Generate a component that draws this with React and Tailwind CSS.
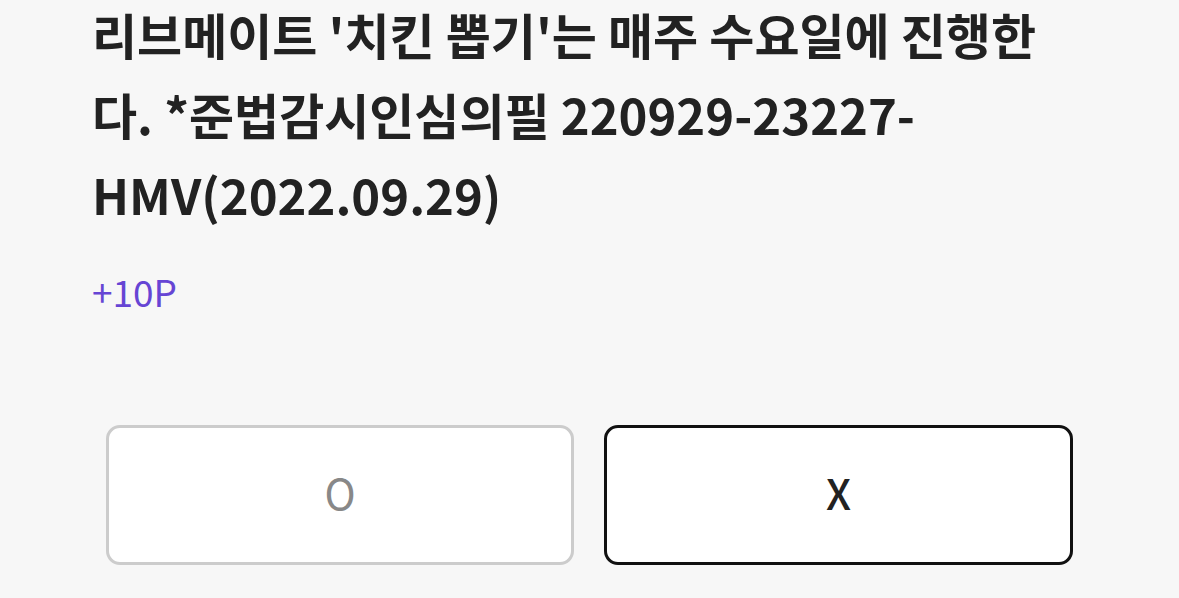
import React from "react";

const font = { fontFamily: '"Noto Sans CJK KR", "Noto Sans", sans-serif' };

const App = () => {
  return (
    <div className="w-[1179px] h-[598px] bg-[#f7f7f7] overflow-hidden" style={font}>
      <div className="pl-[92px] w-[1082px]">
        <p className="text-[49px] leading-[80px] font-bold text-[#222] -mt-[6px]">
          리브메이트 '치킨 뽑기'는 매주 수요일에 진행한다. *준법감시인심의필 220929-23227-HMV(2022.09.29)
        </p>
        <p className="mt-[32px] text-[37px] leading-[50px] text-[#6645d4]">+10P</p>
      </div>
      <div className="flex gap-[30px] px-[106px] mt-[109px]">
        <button className="w-[468px] h-[140px] pb-[8px] bg-white border-[3px] border-[#cccccc] rounded-[14px] text-[42px] text-[#888]">
          O
        </button>
        <button className="w-[469px] h-[140px] pb-[8px] bg-white border-[3px] border-[#111] rounded-[14px] text-[42px] font-medium text-[#222]">
          X
        </button>
      </div>
    </div>
  );
};

export default App;
